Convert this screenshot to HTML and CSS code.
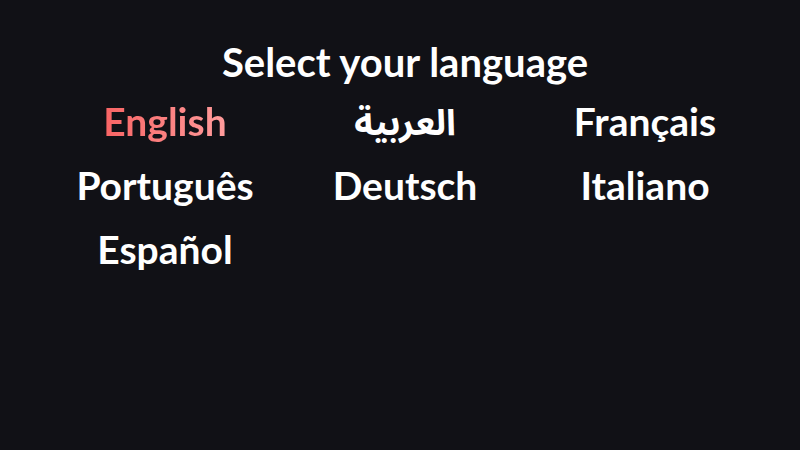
FILE: index.html
```html
<!DOCTYPE html>
<html lang="en">
<head>
<meta charset="utf-8">
<link rel="stylesheet" href="styles.css">
</head>
<body>
<main class="page">
  <h1 class="title">Select your language</h1>
  <ul class="langs">
    <li class="lang active">English</li>
    <li class="lang" lang="ar" dir="rtl">العربية</li>
    <li class="lang">Français</li>
    <li class="lang">Português</li>
    <li class="lang">Deutsch</li>
    <li class="lang">Italiano</li>
    <li class="lang">Español</li>
  </ul>
</main>
</body>
</html>
```
FILE: styles.css
```css
html, body {
  margin: 0;
  height: 100%;
  background: #111116;
}
.page {
  padding: 38px 0 0 10px;
  color: #ffffff;
  font-family: Lato, "Noto Sans", "Noto Sans Arabic", "DejaVu Sans", sans-serif;
  font-weight: 700;
}
.title {
  margin: 0;
  text-align: center;
  font-size: 40px;
  line-height: 48px;
  font-weight: 700;
}
.langs {
  list-style: none;
  margin: 11px 0 0;
  padding: 0;
  display: grid;
  grid-template-columns: repeat(3, 240px);
  justify-content: center;
  row-gap: 16px;
}
.lang {
  text-align: center;
  font-size: 39px;
  line-height: 48px;
}
.lang[lang="ar"] {
  font-size: 36px;
}
.active {
  background: linear-gradient(90deg, #f86464, #ff9c9c);
  -webkit-background-clip: text;
  background-clip: text;
  color: transparent;
  justify-self: center;
}
```
